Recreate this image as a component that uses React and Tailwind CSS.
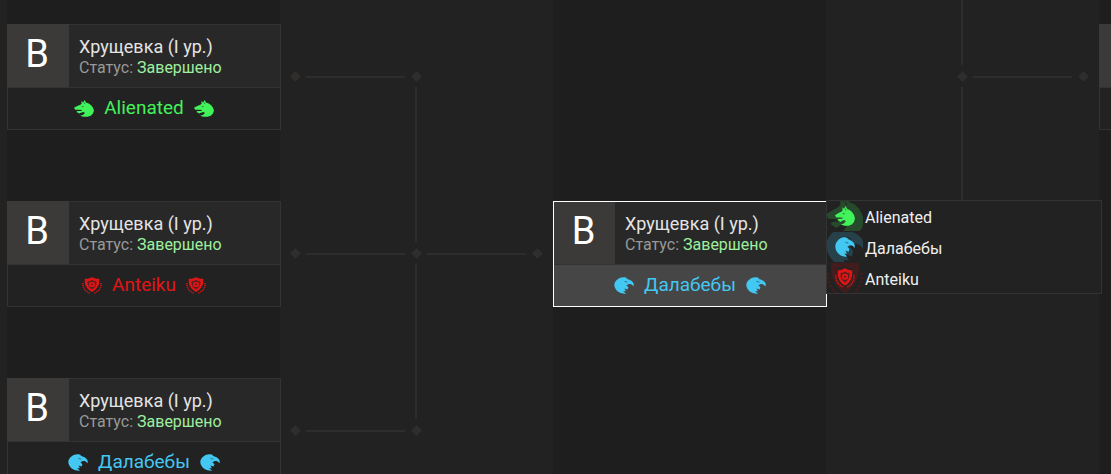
const WOLF = "M0 46 L16 36 L32 28 L38 22 L37 6 L46 15 L52 0 L62 16 L74 20 L87 32 L95 45 L100 62 L95 80 L84 92 L68 99 L46 99 L30 93 L44 88 L54 78 L50 71 L38 73 L27 80 L12 70 L16 65 L34 64 L42 59 L24 58 L6 57 Z";
const EAGLE = "M10 22 C22 6 38 0 54 2 L68 8 L60 10 C78 14 96 24 99 42 L97 56 C92 44 82 41 72 42 L62 49 L72 60 L68 74 L52 68 L60 84 L46 82 L60 98 C34 100 12 86 4 62 C-1 45 2 32 10 22 Z";

function TeamIcon({ team, className }) {
  if (team === "wolf")
    return (
      <svg viewBox="0 0 100 100" preserveAspectRatio="none" className={className} aria-hidden="true">
        <path d={WOLF} fill="currentColor" />
        <path d="M36 39 L50 35 L44 43 Z M52 12 L57 22 L50 20 Z" fill="#222" fillOpacity=".75" />
      </svg>
    );
  if (team === "eagle")
    return (
      <svg viewBox="0 0 100 100" preserveAspectRatio="none" className={className} aria-hidden="true">
        <path d={EAGLE} fill="currentColor" />
        <path d="M48 22 L70 30 L60 32 Z" fill="#222" fillOpacity=".6" />
      </svg>
    );
  return (
    <svg viewBox="0 0 100 100" preserveAspectRatio="none" className={className} aria-hidden="true">
      <path d="M50 0 C62 10 72 11 86 11 C89 44 80 70 50 88 C20 70 11 44 14 11 C28 11 38 10 50 0 Z" fill="currentColor" />
      <path d="M50 18 C58 24 64 25 72 25 C73 46 69 60 50 73 C31 60 27 46 28 25 C36 25 42 24 50 18 Z" fill="#222" fillOpacity=".7" />
      <rect x="35" y="29" width="30" height="30" rx="10" fill="currentColor" />
      <path d="M50 38 V50 M44 44 H56" stroke="#222" strokeWidth="3" />
      <path d="M5 36 C3 64 16 86 42 96 M95 36 C97 64 84 86 58 96" fill="none" stroke="currentColor" strokeWidth="8" strokeDasharray="6 5" />
    </svg>
  );
}

const TEAMS = {
  alienated: { name: "Alienated", icon: "wolf", color: "text-[#42f25a]", dim: "text-[#274a2c]" },
  dalabeby: { name: "Далабебы", icon: "eagle", color: "text-[#42c8f2]", dim: "text-[#27414b]" },
  anteiku: { name: "Anteiku", icon: "shield", color: "text-[#e01616]", dim: "text-[#431d1d]" },
};

function Roster() {
  return (
    <ul className="absolute -top-0.5 left-[272px] z-10 w-[276px] border border-[#333] bg-[#222]">
      {["alienated", "dalabeby", "anteiku"].map((id) => {
        const t = TEAMS[id];
        return (
          <li key={id} className="flex h-[31px] items-start gap-0.5 text-base text-[#f0f0f0] last:h-[30px]">
            <span className="flex h-[30px] w-9 items-center justify-center overflow-hidden">
              <TeamIcon team={t.icon} className={`-mr-[29px] h-10 w-[38px] shrink-0 ${t.dim}`} />
              <TeamIcon team={t.icon} className={`mr-[9px] h-5 w-5 shrink-0 ${t.color}`} />
            </span>
            <span className="leading-[34px]">{t.name}</span>
          </li>
        );
      })}
    </ul>
  );
}

function MatchCard({ team, selected }) {
  const t = TEAMS[team];
  return (
    <article className={`relative w-[274px] border ${selected ? "border-white" : "border-[#333]"}`}>
      <div className="flex h-[62px] bg-[#282828]">
        <div
          className={`flex shrink-0 justify-center bg-[#3b3a38] pr-0.5 text-[38px] leading-[50px] text-white ${
            selected ? "w-[61px] pt-1" : "-mt-px -ml-px w-[62px] pt-[5px]"
          }`}
        >
          B
        </div>
        <div className="pt-3 pl-2.5">
          <h2 className="text-lg leading-5 text-[#e4e4e4]">Хрущевка (I ур.)</h2>
          <p className="text-base leading-[22px] text-[#999]">
            Статус: <span className="text-[#9eef9e]">Завершено</span>
          </p>
        </div>
      </div>
      <div className={`flex h-[42px] items-center justify-center gap-2.5 border-t border-[#333] text-[19px] ${selected ? "bg-[#464646]" : "bg-[#222]"} ${t.color}`}>
        <TeamIcon team={t.icon} className="h-[17px] w-5" />
        <span>{t.name}</span>
        <TeamIcon team={t.icon} className="h-[17px] w-5" />
      </div>
      {selected && <Roster />}
    </article>
  );
}

function Connectors({ nodes, lines }) {
  return (
    <svg className="h-full w-[273px] shrink-0" aria-hidden="true">
      {lines.map(([x1, y1, x2, y2]) => (
        <path key={`${x1}-${y1}-${x2}`} d={`M${x1} ${y1}L${x2} ${y2}`} stroke="#2d2d2d" strokeWidth="2" />
      ))}
      {nodes.map(([x, y]) => (
        <path key={`${x}-${y}`} d={`M${x - 5.5} ${y}l5.5 -5.5l5.5 5.5l-5.5 5.5Z`} fill="#2f2e2c" />
      ))}
    </svg>
  );
}

function Round({ children, className }) {
  return <section className={`flex w-[273px] shrink-0 flex-col gap-[71px] bg-[#1e1e1e] ${className}`}>{children}</section>;
}

export default function App() {
  return (
    <main className="flex h-screen overflow-hidden bg-[#222] pl-[7px] font-['Roboto','Liberation_Sans',sans-serif]">
      <Round className="pt-6">
        <MatchCard team="alienated" />
        <MatchCard team="anteiku" />
        <MatchCard team="dalabeby" />
      </Round>
      <Connectors
        lines={[
          [26, 77, 125, 77],
          [136, 87, 136, 242],
          [26, 254, 125, 254],
          [147, 254, 246, 254],
          [136, 264, 136, 419],
          [26, 431, 125, 431],
        ]}
        nodes={[[15.5, 76.5], [136.5, 76.5], [15.5, 253.5], [136.5, 253.5], [257.5, 253.5], [15.5, 430.5], [136.5, 430.5]]}
      />
      <Round className="pt-[201px]">
        <MatchCard team="dalabeby" selected />
      </Round>
      <Connectors
        lines={[
          [136, 0, 136, 65],
          [147, 77, 246, 77],
          [136, 87, 136, 242],
        ]}
        nodes={[[136.5, 76.5], [257.5, 76.5]]}
      />
      <Round className="pt-6">
        <MatchCard team="alienated" />
      </Round>
    </main>
  );
}
